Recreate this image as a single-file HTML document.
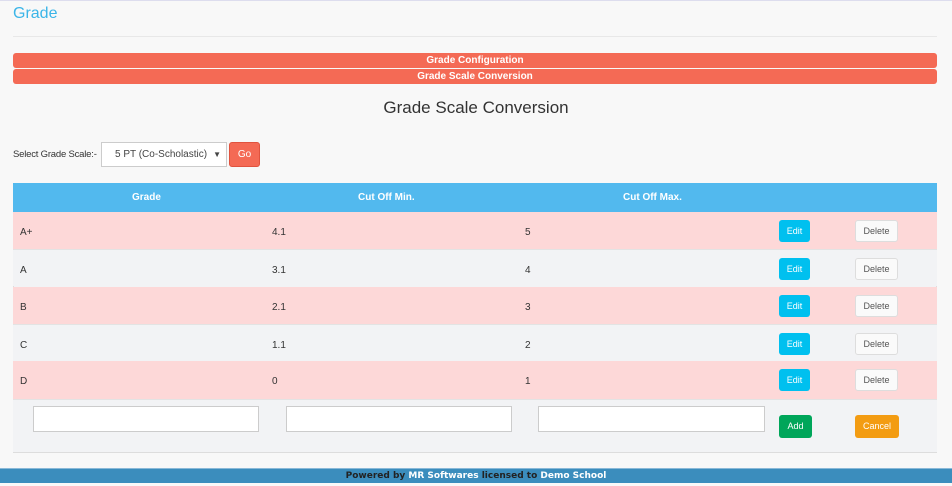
<!DOCTYPE html>
<html><head><style>
*{margin:0;padding:0;box-sizing:border-box}
body{width:952px;height:486px;background:#f8f8f8;font-family:"Liberation Sans",sans-serif;position:relative;overflow:hidden;color:#333}
.a{position:absolute}
.bar{left:13px;width:924px;height:15px;background:#f46a55;border-radius:3px;color:#fff;font-size:10px;font-weight:bold;text-align:center;line-height:15px}
.row{left:13px;width:924px;height:37px;font-size:10px;color:#333}
.row span{position:absolute;top:15px}
.pink{background:#fdd8d8}.gray{background:#f2f3f5}
.edit{position:absolute;left:766px;top:8px;width:31px;height:22px;background:#00c0ef;border-radius:3px;color:#fff;font-size:9px;text-align:center;line-height:22px}
.del{position:absolute;left:842px;top:8px;width:43px;height:22px;background:#fafafa;border:1px solid #ddd;border-radius:3px;color:#555;font-size:9px;text-align:center;line-height:20px}
.inp{position:absolute;top:6px;height:26px;background:#fff;border:1px solid #ccc}
</style></head><body>
<div class="a" style="left:0;top:0;width:952px;height:1px;background:#dde"></div>
<div class="a" style="left:13px;top:5px;font-size:16px;color:#3bb5e8">Grade</div>
<div class="a" style="left:13px;top:36px;width:924px;height:1px;background:#e8e8e8"></div>
<div class="a bar" style="top:53px">Grade Configuration</div>
<div class="a bar" style="top:69px">Grade Scale Conversion</div>
<div class="a" style="left:0;width:952px;top:98px;text-align:center;font-size:17px;color:#333">Grade Scale Conversion</div>
<div class="a" style="left:13px;top:149px;font-size:9.5px;letter-spacing:-0.2px">Select Grade Scale:-</div>
<div class="a" style="left:101px;top:142px;width:126px;height:25px;background:#fff;border:1px solid #ccc;font-size:10px;line-height:23px;padding-left:13px;color:#444">5 PT (Co-Scholastic)<span style="position:absolute;right:5px;font-size:8px">▼</span></div>
<div class="a" style="left:229px;top:142px;width:31px;height:25px;background:#f46a55;border:1px solid #e0533f;border-radius:3px;color:#fff;font-size:10px;text-align:center;line-height:23px">Go</div>
<div class="a" style="left:13px;top:183px;width:924px;height:270px;border:1px solid #ddd;background:#f2f3f5"></div>
<div class="a" style="left:13px;top:183px;width:924px;height:29px;background:#52b9ee;color:#fff;font-size:10px;font-weight:bold">
<span class="a" style="left:119px;top:9px">Grade</span><span class="a" style="left:345px;top:9px">Cut Off Min.</span><span class="a" style="left:610px;top:9px">Cut Off Max.</span></div>
<div class="a row pink" style="top:212px"><span style="left:7px">A+</span><span style="left:259px">4.1</span><span style="left:512px">5</span><div class="edit">Edit</div><div class="del">Delete</div></div>
<div class="a row gray" style="top:249px;border-top:1px solid #e3e3e3"><span style="left:7px">A</span><span style="left:259px">3.1</span><span style="left:512px">4</span><div class="edit">Edit</div><div class="del">Delete</div></div>
<div class="a row pink" style="top:287px"><span style="left:7px">B</span><span style="left:259px">2.1</span><span style="left:512px">3</span><div class="edit">Edit</div><div class="del">Delete</div></div>
<div class="a row gray" style="top:324px;border-top:1px solid #e3e3e3"><span style="left:7px">C</span><span style="left:259px">1.1</span><span style="left:512px">2</span><div class="edit">Edit</div><div class="del">Delete</div></div>
<div class="a row pink" style="top:361px;height:38px"><span style="left:7px">D</span><span style="left:259px">0</span><span style="left:512px">1</span><div class="edit">Edit</div><div class="del">Delete</div></div>
<div class="a row gray" style="top:399px;height:53px;border-top:1px solid #e3e3e3">
<div class="inp" style="left:20px;width:226px"></div><div class="inp" style="left:273px;width:226px"></div><div class="inp" style="left:525px;width:227px"></div>
<div class="a" style="left:766px;top:15px;width:33px;height:23px;background:#00a65a;border-radius:3px;color:#fff;font-size:9px;text-align:center;line-height:23px">Add</div>
<div class="a" style="left:842px;top:15px;width:44px;height:23px;background:#f39c12;border-radius:3px;color:#fff;font-size:9px;text-align:center;line-height:23px">Cancel</div>
</div>
<div class="a" style="left:0;top:468px;width:952px;height:15px;background:#3b8dbd;border-top:1px solid #8ab9d8;text-align:center;font-family:'DejaVu Sans',sans-serif;font-size:9px;font-weight:bold;line-height:14px;color:#222">Powered by <span style="color:#fff">MR Softwares</span> licensed to <span style="color:#fff">Demo School</span></div>
</body></html>
